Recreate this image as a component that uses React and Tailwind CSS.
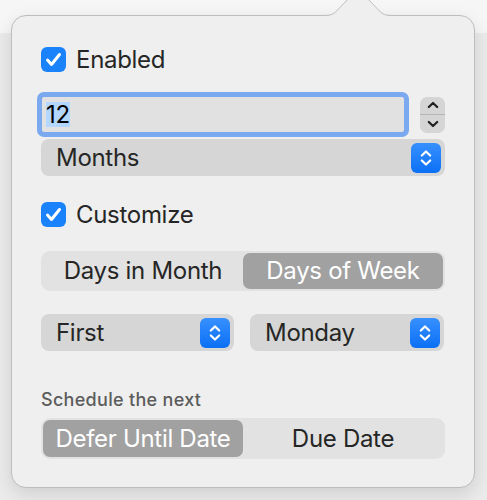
import React from 'react';

const font = { fontFamily: 'Inter, "Liberation Sans", sans-serif' };

const Chevrons = ({ color = '#fff', w = 12, h = 18 }) => (
  <svg width={w} height={h} viewBox="0 0 12 18" fill="none" stroke={color} strokeWidth="2.2" strokeLinecap="round" strokeLinejoin="round">
    <path d="M1.8 6.5 L6 2.5 L10.2 6.5" />
    <path d="M1.8 11.5 L6 15.5 L10.2 11.5" />
  </svg>
);

const Checkbox = ({ label }) => (
  <div className="flex items-center gap-[10px] h-[25px]">
    <div className="w-[25px] h-[25px] rounded-[6px] bg-[#1a82fb] flex items-center justify-center">
      <svg width="25" height="25" viewBox="0 0 25 25" fill="none" stroke="#fff" strokeWidth="3" strokeLinecap="round" strokeLinejoin="round">
        <path d="M6.5 13 L10.5 17.5 L18.5 7.5" />
      </svg>
    </div>
    <span className="text-[24px] leading-[25px] text-[#262626] tracking-[-0.3px]">{label}</span>
  </div>
);

const Select = ({ label, className = '' }) => (
  <div className={`h-[37px] rounded-[8px] bg-[#d5d6d5] flex items-center justify-between pl-[15px] pr-[4px] ${className}`}>
    <span className="text-[24px] leading-[28px] text-[#262626] tracking-[-0.3px]">{label}</span>
    <div className="w-[30px] h-[30px] rounded-[6px] bg-[linear-gradient(to_bottom,#3790ff,#0b70f5)] flex items-center justify-center">
      <Chevrons />
    </div>
  </div>
);

const Segmented = ({ items, active, height }) => (
  <div className={`w-[404px] rounded-[9px] bg-[#e1e2e1] p-[2px] flex ${height}`}>
    {items.map((item, i) => (
      <div
        key={item}
        className={`flex-1 rounded-[7px] flex items-center justify-center text-[24px] leading-[28px] tracking-[-0.3px] ${
          i === active ? 'bg-[#a1a1a1] text-white' : 'text-[#262626]'
        }`}
      >
        {item}
      </div>
    ))}
  </div>
);

export default function App() {
  return (
    <div
      className="w-[487px] h-[500px] overflow-hidden bg-[linear-gradient(to_bottom,#f6f6f6_33px,#ebebeb_33px)] pt-[15px] pl-[11px]"
      style={font}
    >
      {/* Popover */}
      <div className="relative w-[464px] h-[473px] rounded-[15px] border border-[#bdbdbd] bg-[#eeefee] shadow-[0_6px_18px_rgba(0,0,0,0.12)] pt-[31px] pl-[29px]">
        {/* Arrow */}
        <svg className="absolute left-[311px] top-[-22px]" width="70" height="24" viewBox="0 0 70 24">
          <path d="M0 21.5 C8 21.5 10 20.5 14 16.5 L27 3 Q35 -4 43 3 L56 16.5 C60 20.5 62 21.5 70 21.5 L70 24 L0 24 Z" fill="#eeefee" />
          <path d="M0 21.5 C8 21.5 10 20.5 14 16.5 L27 3 Q35 -4 43 3 L56 16.5 C60 20.5 62 21.5 70 21.5" fill="none" stroke="#bdbdbd" strokeWidth="1" />
        </svg>

        <Checkbox label="Enabled" />

        {/* Number field with stepper */}
        <div className="flex items-center mt-[20px] -ml-[4px]">
          <div className="w-[372px] h-[45px] rounded-[7px] border-[5px] border-[#7aa9ef] bg-[#e0e1e0] flex items-center pl-[4px]">
            <span className="text-[24px] leading-[25px] text-black bg-[#b3d7ff] tracking-[-0.3px]">12</span>
          </div>
          <div className="ml-[11px] w-[25px] h-[36px] rounded-[7px] bg-[#d4d5d4] flex flex-col items-center">
            <div className="flex-1 flex items-center justify-center">
              <svg width="12" height="8" viewBox="0 0 12 8" fill="none" stroke="#1f1f1f" strokeWidth="2.2" strokeLinecap="round" strokeLinejoin="round">
                <path d="M1.8 6 L6 2 L10.2 6" />
              </svg>
            </div>
            <div className="w-full h-px bg-[#b5b5b5]" />
            <div className="flex-1 flex items-center justify-center">
              <svg width="12" height="8" viewBox="0 0 12 8" fill="none" stroke="#1f1f1f" strokeWidth="2.2" strokeLinecap="round" strokeLinejoin="round">
                <path d="M1.8 2 L6 6 L10.2 2" />
              </svg>
            </div>
          </div>
        </div>

        <Select label="Months" className="w-[404px] mt-[2px]" />

        <div className="mt-[26px]">
          <Checkbox label="Customize" />
        </div>

        <div className="mt-[24px]">
          <Segmented items={['Days in Month', 'Days of Week']} active={1} height="h-[40px]" />
        </div>

        <div className="flex gap-[16px] mt-[23px]">
          <Select label="First" className="w-[193px] h-[36px]" />
          <Select label="Monday" className="w-[194px] h-[36px]" />
        </div>

        <div className="mt-[39px] text-[18px] leading-[20px] font-medium text-[#5c5c5c] tracking-[0.3px]">
          Schedule the next
        </div>

        <div className="mt-[8px]">
          <Segmented items={['Defer Until Date', 'Due Date']} active={0} height="h-[41px]" />
        </div>
      </div>
    </div>
  );
}
